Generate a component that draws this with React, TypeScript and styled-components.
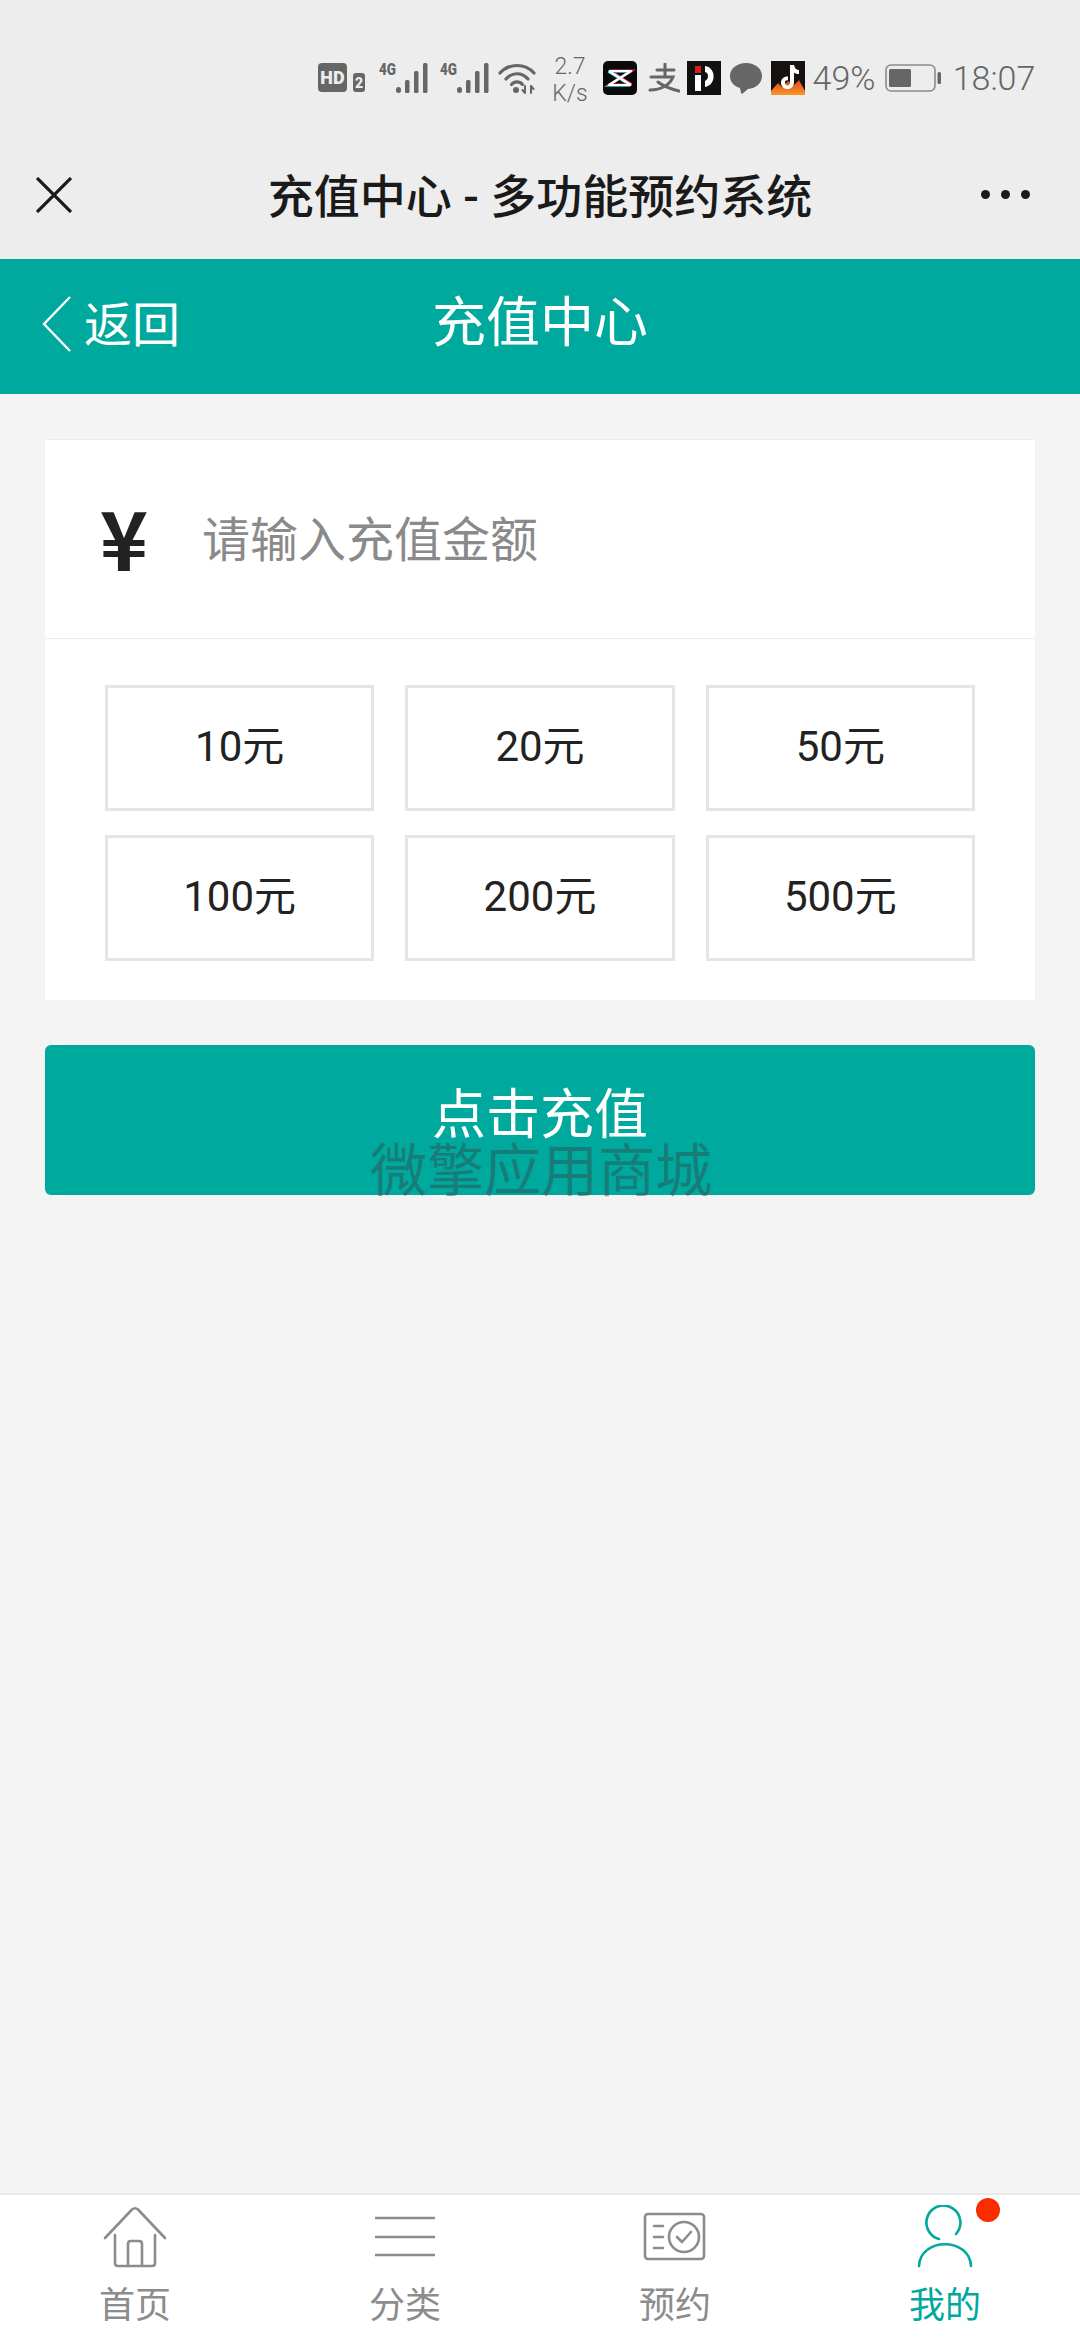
import styled, { createGlobalStyle } from "styled-components";

const TEAL = "#00a99d";
const GREY = "#666666";
const CJK = `Roboto, "Noto Sans CJK SC", sans-serif`;

const amounts = ["10元", "20元", "50元", "100元", "200元", "500元"];

const GlobalStyle = createGlobalStyle`
  html, body { margin: 0; padding: 0; }
  body { font-family: ${CJK}; background: #f4f4f4; }
  * { box-sizing: border-box; }
`;

const Page = styled.div`
  width: 1080px;
  height: 2340px;
  display: flex;
  flex-direction: column;
  background: #f4f4f4;
  overflow: hidden;
`;

const Chrome = styled.header`
  background: #ededed;
  height: 259px;
`;

const StatusBar = styled.div`
  height: 130px;
  padding: 26px 45px 0 0;
  display: flex;
  justify-content: flex-end;
  align-items: center;
  color: ${GREY};
`;

const StatusItem = styled.div<{ $gap: number; $w: number }>`
  margin-left: ${({ $gap }) => $gap}px;
  width: ${({ $w }) => $w}px;
  flex: none;
  display: flex;
  justify-content: center;
  align-items: center;
`;

const Speed = styled.div`
  font-size: 23px;
  line-height: 27px;
  font-weight: 300;
  text-align: center;
  white-space: nowrap;
  padding-top: 4px;
`;

const StatusText = styled.span`
  font-size: 34px;
  font-weight: 300;
  white-space: nowrap;
`;

const SignalSvg = styled.svg`
  display: block;
  margin-top: -6px;
`;

const NavBar = styled.div`
  height: 129px;
  padding: 0 36px;
  display: grid;
  grid-template-columns: 72px 1fr 72px;
  align-items: center;
`;

const NavTitle = styled.div`
  text-align: center;
  font-size: 46px;
  line-height: 60px;
  margin-top: 4px;
  font-weight: 500;
  color: #1a1a1a;
  white-space: nowrap;
`;

const Dots = styled.div`
  display: flex;
  justify-content: flex-end;
  gap: 11px;
  padding-right: 14px;
  margin-left: -20px;
`;

const Dot = styled.i`
  flex: none;
  width: 9px;
  height: 9px;
  border-radius: 50%;
  background: #1a1a1a;
`;

const AppHeader = styled.div`
  height: 135px;
  background: ${TEAL};
  color: #fff;
  display: grid;
  grid-template-columns: 1fr auto 1fr;
  align-items: center;
  padding: 0 42px;
`;

const Back = styled.div`
  display: flex;
  align-items: center;
  gap: 12px;
  font-size: 48px;
  line-height: 56px;
  margin-top: -5px;
`;

const BackLabel = styled.span`
  margin-top: 4px;
`;

const HeaderTitle = styled.div`
  font-size: 54px;
  line-height: 60px;
  margin-top: -6px;
`;

const Main = styled.main`
  flex: 1;
  padding: 45px 45px 0;
  display: flex;
  flex-direction: column;
  gap: 45px;
`;

const Card = styled.section`
  background: #fff;
  border-top: 1px solid #ececec;
`;

const AmountField = styled.div`
  height: 199px;
  padding: 0 0 6px 52px;
  display: flex;
  align-items: center;
  gap: 51px;
  border-bottom: 1px solid #ececec;
`;

const Yen = styled.span`
  width: 54px;
  text-align: center;
  font-size: 82px;
  line-height: 82px;
  font-weight: 700;
  color: #222;
  font-family: "Noto Sans CJK SC", sans-serif;
`;

const Placeholder = styled.span`
  font-size: 48px;
  color: #8a8a8a;
`;

const AmountGrid = styled.div`
  display: grid;
  grid-template-columns: repeat(3, 1fr);
  gap: 24px 31px;
  padding: 46px 60px 39px;
`;

const AmountOption = styled.div`
  height: 126px;
  border: 3px solid #e5e5e5;
  display: flex;
  align-items: center;
  justify-content: center;
  padding-bottom: 12px;
  font-size: 42px;
  color: #222;
`;

const SubmitButton = styled.div`
  position: relative;
  height: 150px;
  border-radius: 6px;
  background: ${TEAL};
  color: #fff;
  font-size: 54px;
  display: flex;
  justify-content: center;
  padding-top: 36px;
  line-height: 70px;
`;

const Watermark = styled.span`
  position: absolute;
  left: 2px;
  right: 0;
  bottom: -9px;
  line-height: 64px;
  text-align: center;
  font-size: 57px;
  color: rgba(40, 90, 90, 0.55);
`;

const TabBar = styled.nav`
  height: 147px;
  background: #fff;
  border-top: 2px solid #e8e8e8;
  display: grid;
  grid-template-columns: repeat(4, 1fr);
`;

const Tab = styled.div<{ $active?: boolean }>`
  position: relative;
  display: flex;
  flex-direction: column;
  align-items: center;
  padding-top: 10px;
  color: ${({ $active }) => ($active ? TEAL : "#8c8c8c")};
`;

const TabIcon = styled.svg`
  display: block;
  width: 66px;
  height: 66px;
  fill: none;
  stroke: currentColor;
  stroke-width: 2.6;
  stroke-linecap: round;
  stroke-linejoin: round;
`;

const TabLabel = styled.span`
  font-size: 36px;
  line-height: 44px;
  margin-top: 13px;
`;

const Badge = styled.i`
  position: absolute;
  top: 3px;
  left: 166px;
  width: 24px;
  height: 24px;
  border-radius: 50%;
  background: #fa2c00;
`;

const HdIcon = () => (
  <svg width="47" height="30" viewBox="0 0 47 30">
    <rect x="0" y="0" width="29" height="29" rx="4" fill={GREY} />
    <text x="14.5" y="21" textAnchor="middle" fontFamily="Roboto" fontSize="18" fontWeight="900" fill="#ededed">HD</text>
    <rect x="35" y="10" width="12" height="19" rx="3" fill={GREY} />
    <text x="41" y="25" textAnchor="middle" fontFamily="Roboto" fontSize="14" fontWeight="900" fill="#ededed">2</text>
  </svg>
);

const SignalIcon = () => (
  <SignalSvg width="49" height="36" viewBox="0 -6 49 36">
    <text x="0" y="12" fontFamily="Roboto" fontSize="16" fontWeight="900" fill={GREY} textLength="17" lengthAdjust="spacingAndGlyphs">4G</text>
    <rect x="17" y="24" width="5" height="6" rx="2.500" fill={GREY} />
    <rect x="26" y="17" width="4.500" height="13" rx="1.500" fill={GREY} />
    <rect x="35" y="8" width="4.500" height="22" rx="1.500" fill={GREY} />
    <rect x="44" y="0" width="4.500" height="30" rx="1.500" fill={GREY} />
  </SignalSvg>
);

const WifiIcon = () => (
  <svg width="38" height="32" viewBox="0 0 38 32" fill="none" stroke={GREY} strokeWidth="3.200" strokeLinecap="round">
    <path d="M2 11C11 1 27 1 36 11" />
    <path d="M8 17C14 10 24 10 30 17" />
    <path d="M13.500 22.500C16.500 19 21.500 19 24.500 22.500" />
    <circle cx="18" cy="28" r="3" fill={GREY} stroke="none" />
    <path d="M27 24v7M27 31l-2.500-3M33 31v-7M33 24l2.500 3" strokeWidth="2" />
  </svg>
);

const CapcutIcon = () => (
  <svg width="34" height="34" viewBox="0 0 34 34">
    <rect width="34" height="34" rx="5" fill="#0a0a0a" />
    <path d="M6 10H28L6 24H28M6 10L28 24" transform="translate(-.8 .6)" fill="none" stroke="#2fd8e0" strokeWidth="2.400" />
    <path d="M6 10H28L6 24H28M6 10L28 24" transform="translate(.8 -.4)" fill="none" stroke="#f03060" strokeWidth="2.400" />
    <path d="M6 10H28L6 24H28M6 10L28 24" fill="none" stroke="#fff" strokeWidth="2.200" strokeLinejoin="round" />
  </svg>
);

const AlipayIcon = () => (
  <svg width="32" height="30" viewBox="0 0 32 30" fill="none" stroke={GREY} strokeWidth="3" strokeLinecap="round">
    <path d="M9 7H26M17 1V14M3 14H25C22 22 13 27 2 27M10 19C15 23 23 26 31 28" />
  </svg>
);

const PIcon = () => (
  <svg width="34" height="34" viewBox="0 0 34 34">
    <rect width="34" height="34" fill="#111" />
    <rect x="8" y="5" width="6" height="7" fill="#d81e1e" />
    <rect x="8" y="14" width="6" height="16" fill="#fff" />
    <path d="M18 5c11 1 12 19 0 21v-6c4-2 4-8 0-9z" fill="#fff" />
  </svg>
);

const ChatIcon = () => (
  <svg width="32" height="32" viewBox="0 0 32 32">
    <path d="M16 1C7 1 0 6.500 0 14c0 6 4 10 10 12l1 5c.5.800 1 .800 2 .300l5-4.300C26 26.500 32 21 32 14 32 6.500 25 1 16 1z" fill={GREY} />
  </svg>
);

const TiktokIcon = () => (
  <svg width="34" height="34" viewBox="0 0 34 34">
    <defs>
      <linearGradient id="flame" x1="0" y1="0" x2="0" y2="1">
        <stop offset="0" stopColor="#d9481a" />
        <stop offset="1" stopColor="#f9962b" />
      </linearGradient>
    </defs>
    <rect width="34" height="34" fill="#17110f" />
    <path d="M0 34V30L7 22L11 26L17 20L23 24L28 19L34 30V34z" fill="url(#flame)" />
    <path d="M19 4h4c.5 3 2.500 5 5 5v4c-2 0-3.500-.5-5-1.500V21c0 4.500-3 7-6.500 7S10 25.500 10 21.500 13.500 15 17 15.500v4c-2-.5-3 .5-3 2 0 1.500 1 3 2.500 3s2.500-1 2.500-3z" fill="#fff" />
  </svg>
);

const BatteryIcon = () => (
  <svg width="56" height="28" viewBox="0 0 56 28" fill="none">
    <rect x="1" y="1" width="49" height="26" rx="5" stroke="#8a8a8a" strokeWidth="1.600" />
    <rect x="4" y="5" width="22" height="18" rx="1.500" fill={GREY} />
    <rect x="52.500" y="8" width="3.500" height="12" rx="1.500" fill={GREY} />
  </svg>
);

const App = () => (
  <Page>
    <GlobalStyle />
    <Chrome>
      <StatusBar>
        <StatusItem $gap={0} $w={47}><HdIcon /></StatusItem>
        <StatusItem $gap={14} $w={49}><SignalIcon /></StatusItem>
        <StatusItem $gap={12} $w={49}><SignalIcon /></StatusItem>
        <StatusItem $gap={9} $w={38}><WifiIcon /></StatusItem>
        <StatusItem $gap={17} $w={34}>
          <Speed>2.7<br />K/s</Speed>
        </StatusItem>
        <StatusItem $gap={16} $w={34}><CapcutIcon /></StatusItem>
        <StatusItem $gap={11} $w={32}><AlipayIcon /></StatusItem>
        <StatusItem $gap={7} $w={34}><PIcon /></StatusItem>
        <StatusItem $gap={9} $w={32}><ChatIcon /></StatusItem>
        <StatusItem $gap={9} $w={34}><TiktokIcon /></StatusItem>
        <StatusItem $gap={8} $w={62}><StatusText>49%</StatusText></StatusItem>
        <StatusItem $gap={10} $w={56}><BatteryIcon /></StatusItem>
        <StatusItem $gap={12} $w={82}><StatusText>18:07</StatusText></StatusItem>
      </StatusBar>
      <NavBar>
        <svg width="36" height="36" viewBox="0 0 36 36" stroke="#1a1a1a" strokeWidth="3.200">
          <path d="M1 1L35 35M35 1L1 35" />
        </svg>
        <NavTitle>充值中心 - 多功能预约系统</NavTitle>
        <Dots><Dot /><Dot /><Dot /></Dots>
      </NavBar>
    </Chrome>
    <AppHeader>
      <Back>
        <svg width="30" height="56" viewBox="0 0 30 56" fill="none" stroke="#fff" strokeWidth="2.400">
          <path d="M28 1L2 28L28 55" />
        </svg>
        <BackLabel>返回</BackLabel>
      </Back>
      <HeaderTitle>充值中心</HeaderTitle>
    </AppHeader>
    <Main>
      <Card>
        <AmountField>
          <Yen>¥</Yen>
          <Placeholder>请输入充值金额</Placeholder>
        </AmountField>
        <AmountGrid>
          {amounts.map((amount) => (
            <AmountOption key={amount}>{amount}</AmountOption>
          ))}
        </AmountGrid>
      </Card>
      <SubmitButton>
        点击充值
        <Watermark>微擎应用商城</Watermark>
      </SubmitButton>
    </Main>
    <TabBar>
      <Tab>
        <TabIcon viewBox="0 0 66 66">
          <path d="M3 33L30 4.500Q33 2 36 4.500L63 33" />
          <path d="M13 30V58Q13 61 16 61H50Q53 61 53 58V30" />
          <path d="M26 61V39Q26 36 29 36H37Q40 36 40 39V61" />
        </TabIcon>
        <TabLabel>首页</TabLabel>
      </Tab>
      <Tab>
        <TabIcon viewBox="0 0 66 66">
          <path d="M3 13H63M3 32H63M3 50H63" strokeLinecap="butt" />
        </TabIcon>
        <TabLabel>分类</TabLabel>
      </Tab>
      <Tab>
        <TabIcon viewBox="0 0 66 66">
          <rect x="3" y="9" width="59" height="45" rx="3" />
          <circle cx="42" cy="32" r="15" />
          <path d="M12 21H21M12 32H21M12 43H21M35 32L40 37L49 27" />
        </TabIcon>
        <TabLabel>预约</TabLabel>
      </Tab>
      <Tab $active>
        <TabIcon viewBox="0 0 66 66">
          <path d="M44 29A17 17 0 1 0 27 34" />
          <path d="M7 61C8 32 58 32 59 61" />
        </TabIcon>
        <TabLabel>我的</TabLabel>
        <Badge />
      </Tab>
    </TabBar>
  </Page>
);

export default App;
